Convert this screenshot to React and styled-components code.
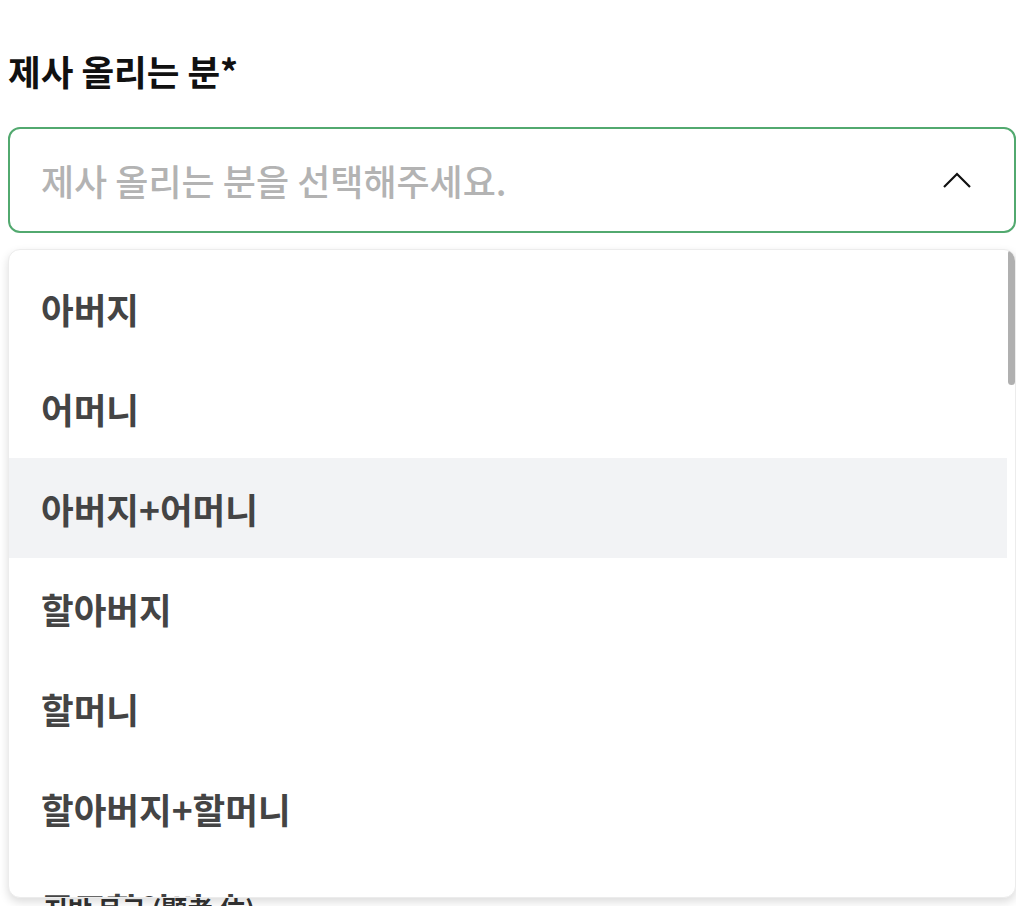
import styled, { createGlobalStyle } from "styled-components"

const GlobalStyle = createGlobalStyle`
  body {
    margin: 0;
    background: #fff;
    overflow: hidden;
    font-family: "Noto Sans CJK KR", "Noto Sans", sans-serif;
  }
`

const Page = styled.div`
  padding: 50px 0 0 8px;
  width: 1008px;
`

const Label = styled.div`
  font-size: 35.5px;
  font-weight: 700;
  line-height: 42px;
  color: #111;
`

const SelectWrap = styled.div`
  position: relative;
  margin-top: 35px;
  z-index: 2;
`

const SelectBox = styled.div`
  box-sizing: border-box;
  height: 106px;
  border: 2px solid #52a96f;
  border-radius: 12px;
  display: flex;
  align-items: center;
  justify-content: space-between;
  padding: 0 42px 0 31px;
`

const Placeholder = styled.span`
  font-size: 36px;
  font-weight: 500;
  color: #b3b3b3;
`

const Menu = styled.ul`
  position: absolute;
  top: calc(100% + 16px);
  left: 0;
  width: 1008px;
  height: 649px;
  box-sizing: border-box;
  margin: 0;
  padding: 8px 0;
  list-style: none;
  background: #fff;
  border: 1px solid #ececec;
  border-radius: 12px;
  box-shadow: 0 4px 10px rgba(0, 0, 0, 0.14);
  overflow: hidden;
`

const ScrollThumb = styled.div`
  position: absolute;
  top: 0;
  right: 0;
  width: 7px;
  height: 135px;
  border-radius: 4px;
  background: #b0b0b0;
`

const Option = styled.li`
  height: 100px;
  margin-right: 8px;
  display: flex;
  align-items: center;
  padding: 0 32px;
  font-size: 35.5px;
  font-weight: 600;
  color: #444;
  background: ${(p) => (p.$active ? "#f2f3f5" : "transparent")};
`

const NextLabel = styled.div`
  margin: 660px 0 0 36px;
  font-size: 26px;
  font-weight: 600;
  line-height: 32px;
  color: #333;
`

const options = [
  "아버지", "어머니", "아버지+어머니", "할아버지", "할머니", "할아버지+할머니",
  "증조할아버지", "증조할머니", "증조할아버지+증조할머니", "고조할아버지",
]

const Chevron = () => (
  <svg width="30" height="18" viewBox="0 0 30 18" fill="none">
    <polyline points="2,16 15,3 28,16" stroke="#111" strokeWidth="2.2" />
  </svg>
)

const App = () => {
  return (
    <Page>
      <GlobalStyle />
      <Label>제사 올리는 분*</Label>
      <SelectWrap>
        <SelectBox>
          <Placeholder>제사 올리는 분을 선택해주세요.</Placeholder>
          <Chevron />
        </SelectBox>
        <Menu>
          <ScrollThumb />
          {options.map((o, i) => (
            <Option key={o} $active={i === 2}>{o}</Option>
          ))}
        </Menu>
      </SelectWrap>
      <NextLabel>지방 문구 (顯考 位)</NextLabel>
    </Page>
  )
}

export default App
